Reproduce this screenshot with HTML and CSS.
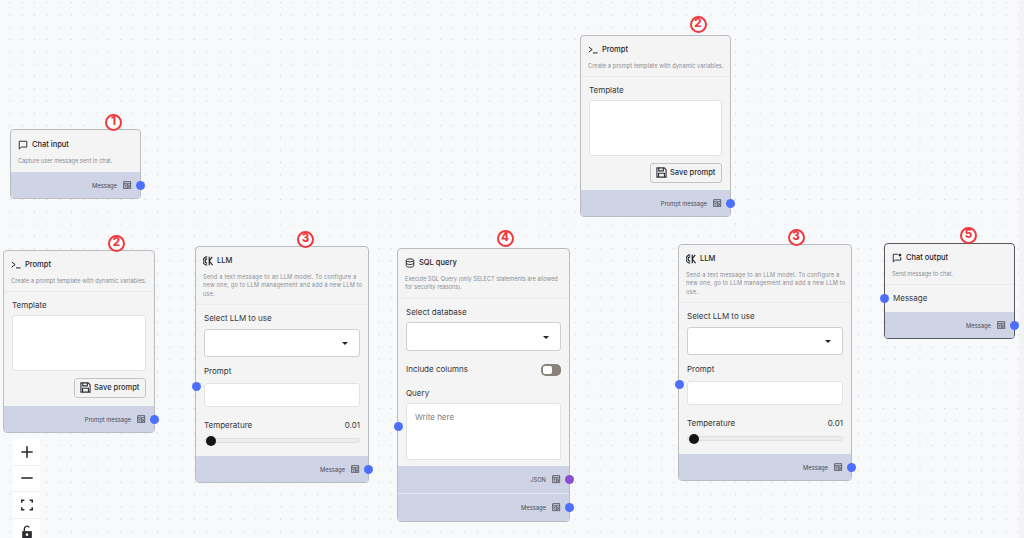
FILE: index.html
```html
<!DOCTYPE html>
<html lang="en">
<head>
<meta charset="utf-8">
<title>Flow canvas</title>
<link rel="stylesheet" href="styles.css">
</head>
<body>
<svg class="defs" width="0" height="0" aria-hidden="true">
  <symbol id="i-out" viewBox="0 0 12 12"><path d="M1 1h10v10H1zM1 4h10M6 4v7M7.500 6l2.500 3.500M10 6L7.500 9.500M2.500 6.500h2M2.500 8.500h2" fill="none" stroke="currentColor" stroke-width="1.200"/></symbol>
  <symbol id="i-chat" viewBox="0 0 12 12"><path d="M1.500 1.500h9v7H4L1.500 10.800z" fill="none" stroke="currentColor" stroke-width="1.100" stroke-linejoin="round"/></symbol>
  <symbol id="i-chatout" viewBox="0 0 12 12"><path d="M7 1.500H1.500v9.300L4 8.500h6.500V5" fill="none" stroke="currentColor" stroke-width="1.100" stroke-linejoin="round"/><circle cx="9.500" cy="2.500" r="1.700" fill="currentColor"/></symbol>
  <symbol id="i-prompt" viewBox="0 0 12 12"><path d="M1 2.500L5 5.500 1 8.500M6 9.500h5.500" fill="none" stroke="currentColor" stroke-width="1.200"/></symbol>
  <symbol id="i-llm" viewBox="0 0 12 12"><path d="M5 1a5 5 0 0 0 0 10M5 3.500a2.500 2.500 0 0 0 0 5M7.500 .8v10.400M7.500 6l3.500-5M7.500 6l4 5" fill="none" stroke="currentColor" stroke-width="1.400"/></symbol>
  <symbol id="i-db" viewBox="0 0 12 12"><ellipse cx="6" cy="2.800" rx="4.500" ry="1.800" fill="none" stroke="currentColor" stroke-width="1.100"/><path d="M1.500 2.800v6.400c0 1 2 1.800 4.500 1.800s4.500-.8 4.500-1.800V2.800M1.500 6c0 1 2 1.800 4.500 1.800s4.500-.8 4.500-1.800" fill="none" stroke="currentColor" stroke-width="1.100"/></symbol>
  <symbol id="i-save" viewBox="0 0 12 12"><path d="M1 1h8l2 2v8H1zM3 1v3.200h5V1M2.800 11V6.800h6.400V11" fill="none" stroke="currentColor" stroke-width="1.200"/></symbol>
</svg>

<main class="canvas">

  <section class="node node-chat-input">
    <span class="badge">1</span>
    <header class="node-head">
      <h2 class="node-title"><svg class="head-icon"><use href="#i-chat"/></svg>Chat input</h2>
      <p class="node-desc">Capture user message sent in chat.</p>
    </header>
    <div class="outputs">
      <div class="output">Message<svg class="out-icon"><use href="#i-out"/></svg><span class="handle handle-out"></span></div>
    </div>
  </section>

  <section class="node node-prompt node-prompt-a">
    <span class="badge">2</span>
    <header class="node-head">
      <h2 class="node-title"><svg class="head-icon"><use href="#i-prompt"/></svg>Prompt</h2>
      <p class="node-desc">Create a prompt template with dynamic variables.</p>
    </header>
    <div class="node-body">
      <div class="field">
        <label class="field-label">Template</label>
        <div class="box box-template"></div>
      </div>
      <div class="button-row"><button class="save"><svg class="save-icon"><use href="#i-save"/></svg>Save prompt</button></div>
    </div>
    <div class="outputs">
      <div class="output">Prompt message<svg class="out-icon"><use href="#i-out"/></svg><span class="handle handle-out"></span></div>
    </div>
  </section>

  <section class="node node-llm node-llm-a">
    <span class="badge">3</span>
    <header class="node-head">
      <h2 class="node-title"><svg class="head-icon"><use href="#i-llm"/></svg>LLM</h2>
      <p class="node-desc">Send a text message to an LLM model. To configure a<br>new one, go to LLM management and add a new LLM to<br>use.</p>
    </header>
    <div class="node-body">
      <div class="field">
        <label class="field-label">Select LLM to use</label>
        <div class="box box-select"><span class="caret"></span></div>
      </div>
      <div class="field">
        <label class="field-label">Prompt</label>
        <div class="box box-input"><span class="handle handle-in"></span></div>
      </div>
      <div class="field field-temperature">
        <div class="label-row"><label class="field-label">Temperature</label><span class="field-label">0.01</span></div>
        <div class="slider"><span class="thumb"></span></div>
      </div>
    </div>
    <div class="outputs">
      <div class="output">Message<svg class="out-icon"><use href="#i-out"/></svg><span class="handle handle-out"></span></div>
    </div>
  </section>

  <section class="node node-sql">
    <span class="badge">4</span>
    <header class="node-head">
      <h2 class="node-title"><svg class="head-icon"><use href="#i-db"/></svg>SQL query</h2>
      <p class="node-desc">Execute SQL Query (only SELECT statements are allowed for security reasons).</p>
    </header>
    <div class="node-body">
      <div class="field">
        <label class="field-label">Select database</label>
        <div class="box box-select"><span class="caret"></span></div>
      </div>
      <div class="field toggle-row">
        <label class="field-label">Include columns</label>
        <span class="toggle"><span class="knob"></span></span>
      </div>
      <div class="field">
        <label class="field-label">Query</label>
        <div class="box box-query">Write here<span class="handle handle-in handle-query"></span></div>
      </div>
    </div>
    <div class="outputs">
      <div class="output">JSON<svg class="out-icon"><use href="#i-out"/></svg><span class="handle handle-out handle-json"></span></div>
      <div class="output">Message<svg class="out-icon"><use href="#i-out"/></svg><span class="handle handle-out"></span></div>
    </div>
  </section>

  <section class="node node-prompt node-prompt-b">
    <span class="badge">2</span>
    <header class="node-head">
      <h2 class="node-title"><svg class="head-icon"><use href="#i-prompt"/></svg>Prompt</h2>
      <p class="node-desc">Create a prompt template with dynamic variables.</p>
    </header>
    <div class="node-body">
      <div class="field">
        <label class="field-label">Template</label>
        <div class="box box-template"></div>
      </div>
      <div class="button-row"><button class="save"><svg class="save-icon"><use href="#i-save"/></svg>Save prompt</button></div>
    </div>
    <div class="outputs">
      <div class="output">Prompt message<svg class="out-icon"><use href="#i-out"/></svg><span class="handle handle-out"></span></div>
    </div>
  </section>

  <section class="node node-llm node-llm-b">
    <span class="badge">3</span>
    <header class="node-head">
      <h2 class="node-title"><svg class="head-icon"><use href="#i-llm"/></svg>LLM</h2>
      <p class="node-desc">Send a text message to an LLM model. To configure a<br>new one, go to LLM management and add a new LLM to<br>use.</p>
    </header>
    <div class="node-body">
      <div class="field">
        <label class="field-label">Select LLM to use</label>
        <div class="box box-select"><span class="caret"></span></div>
      </div>
      <div class="field">
        <label class="field-label">Prompt</label>
        <div class="box box-input"><span class="handle handle-in"></span></div>
      </div>
      <div class="field field-temperature">
        <div class="label-row"><label class="field-label">Temperature</label><span class="field-label">0.01</span></div>
        <div class="slider"><span class="thumb"></span></div>
      </div>
    </div>
    <div class="outputs">
      <div class="output">Message<svg class="out-icon"><use href="#i-out"/></svg><span class="handle handle-out"></span></div>
    </div>
  </section>

  <section class="node node-chat-output">
    <span class="badge">5</span>
    <header class="node-head">
      <h2 class="node-title"><svg class="head-icon"><use href="#i-chatout"/></svg>Chat output</h2>
      <p class="node-desc">Send message to chat.</p>
    </header>
    <div class="node-body">
      <div class="field">
        <label class="field-label">Message</label>
        <span class="handle handle-in handle-message"></span>
      </div>
    </div>
    <div class="outputs">
      <div class="output">Message<svg class="out-icon"><use href="#i-out"/></svg><span class="handle handle-out"></span></div>
    </div>
  </section>

  <nav class="controls">
    <button class="control"><svg class="control-icon" viewBox="0 0 16 16"><path d="M8 1.500v13M1.500 8h13" fill="none" stroke="currentColor" stroke-width="1.800"/></svg></button>
    <button class="control"><svg class="control-icon" viewBox="0 0 16 16"><path d="M1.500 8h13" fill="none" stroke="currentColor" stroke-width="1.800"/></svg></button>
    <button class="control"><svg class="control-icon" viewBox="0 0 16 16"><path d="M2 5.500V2.500h3M11 2.500h3v3M14 10.500v3h-3M5 13.500H2v-3" fill="none" stroke="currentColor" stroke-width="1.800"/></svg></button>
    <button class="control"><svg class="control-icon" viewBox="0 0 16 16"><path d="M2.500 7h11v8h-11z" fill="currentColor"/><path d="M5 7V4.500a3 3 0 0 1 5.500-1.800" fill="none" stroke="currentColor" stroke-width="1.600"/><circle cx="8" cy="11" r="1.500" fill="#fff"/></svg></button>
  </nav>

  <div class="scroll-track"></div>

</main>
</body>
</html>
```

FILE: styles.css
```css
* { box-sizing: border-box; }

html, body {
  margin: 0;
  height: 100%;
  overflow: hidden;
}

body {
  font-family: Inter, "Noto Sans", sans-serif;
  color: #1f2329;
}

.defs { position: absolute; }

.canvas {
  position: relative;
  width: 1024px;
  height: 538px;
  overflow: hidden;
  background-color: #f8f9fb;
  background-image: radial-gradient(circle, #d2d5da 0.6px, transparent 1px);
  background-size: 12.3px 12.3px;
  background-position: 3.85px -3.45px;
}

.scroll-track {
  position: absolute;
  top: 0;
  right: 0;
  bottom: 0;
  width: 5px;
  background: #f3f3f5;
}

/* free canvas placement of diagram nodes */
.node {
  position: absolute;
  z-index: 1;
  display: flex;
  flex-direction: column;
  background: #f4f4f4;
  border: 1.5px solid #b9bcc1;
  border-radius: 4px;
}
.node-chat-input  { left: 10px;  top: 129px; width: 131px; height: 70px; }
.node-prompt-a    { left: 3px;   top: 250px; width: 152px; height: 183px; }
.node-llm-a       { left: 195px; top: 246px; width: 174px; height: 237px; }
.node-sql         { left: 397px; top: 248px; width: 173px; height: 274px; }
.node-prompt-b    { left: 580px; top: 35px;  width: 151px; height: 182px; }
.node-llm-b       { left: 678px; top: 244px; width: 174px; height: 237px; }
.node-chat-output { left: 884px; top: 243px; width: 131px; height: 96px; border-color: #55585d; }

.badge {
  position: absolute;
  left: 50%;
  width: 17px;
  height: 17px;
  display: flex;
  align-items: center;
  justify-content: center;
  border: 2px solid #f0393d;
  border-radius: 50%;
  color: #f0393d;
  background: #fff;
  font-size: 11.500px;
  font-weight: 800;
  line-height: 1;
}
.node-chat-input .badge  { margin-left: 29.500px; top: -16.500px; }
.node-prompt-a .badge    { margin-left: 29px; top: -16.500px; }
.node-llm-a .badge       { margin-left: 15px; top: -16.500px; }
.node-sql .badge         { margin-left: 13px; top: -19.500px; }
.node-prompt-b .badge    { margin-left: 34px; top: -20.500px; }
.node-llm-b .badge       { margin-left: 22.500px; top: -16.500px; }
.node-chat-output .badge { margin-left: 10.500px; top: -17.500px; }

.node-head {
  padding: 8px 7px 6px;
  border-bottom: 1px solid #ebebeb;
}
.node-chat-input .node-head { flex: 1; padding-top: 9px; border-bottom: 0; }

.node-title {
  display: flex;
  align-items: center;
  gap: 4px;
  margin: 0 0 7px;
  height: 11px;
  font-size: 7.500px;
  font-weight: 500;
  line-height: 11px;
}

.head-icon {
  width: 10px;
  height: 10px;
  flex: none;
}

.node-desc {
  margin: 0;
  font-size: 5.650px;
  line-height: 8.300px;
  color: #8b8e94;
}
.node-llm .node-desc { letter-spacing: 0.2px; white-space: nowrap; }
.node-prompt .node-desc { letter-spacing: 0.07px; white-space: nowrap; }

.node-body {
  flex: 1;
  display: flex;
  flex-direction: column;
  padding: 8px 8px 0;
}

.field { position: relative; }
.node-llm .field + .field { margin-top: 9px; }
.node-llm .field-temperature.field { margin-top: 13.500px; }
.node-sql .field + .field { margin-top: 12.500px; }

.field-label {
  display: block;
  font-size: 8px;
  line-height: 11px;
  color: #33363b;
}

.label-row {
  display: flex;
  justify-content: space-between;
}

.box {
  position: relative;
  margin-top: 5px;
  background: #fff;
  border: 1px solid #e1e2e4;
  border-radius: 3px;
}
.box-template { height: 56px; margin-top: 4px; }
.box-select {
  height: 28px;
  border: 1.500px solid #cfd0d3;
}
.node-sql .box-select { height: 29px; margin-top: 4.500px; }
.box-input { height: 24px; margin-top: 6px; }
.box-query {
  height: 57px;
  margin-top: 3.500px;
  padding: 8px 8px;
  font-size: 8px;
  line-height: 10px;
  color: #7e8085;
}

.caret {
  position: absolute;
  right: 11px;
  top: 50%;
  margin-top: -1px;
  border: 3px solid transparent;
  border-top: 3.500px solid #1f2329;
  border-bottom: 0;
}

.slider {
  position: relative;
  height: 5px;
  margin-top: 7px;
  background: #ececec;
  border: 1px solid #dfdfdf;
  border-radius: 3px;
}
.thumb {
  position: absolute;
  left: 1px;
  top: -3.500px;
  width: 10px;
  height: 10px;
  border-radius: 50%;
  background: #161616;
}

.toggle-row {
  display: flex;
  align-items: center;
  justify-content: space-between;
  height: 12px;
}
.toggle {
  display: flex;
  justify-content: flex-start;
  width: 20px;
  height: 12px;
  padding: 2px;
  background: #8a8178;
  border-radius: 5px;
}
.knob {
  width: 9px;
  height: 8px;
  background: #fff;
  border-radius: 2px;
}

.button-row {
  display: flex;
  justify-content: flex-end;
  margin-top: 6.500px;
}
.save {
  display: flex;
  align-items: center;
  gap: 3px;
  height: 20px;
  width: 72px;
  padding: 0 5px;
  background: #f4f4f4;
  border: 1px solid #c4c5c8;
  border-radius: 3px;
  color: #2c2f34;
  font-family: inherit;
  font-size: 7.500px;
  font-weight: 500;
  white-space: nowrap;
}
.save-icon {
  width: 11px;
  height: 11px;
  flex: none;
}

.outputs { display: flex; flex-direction: column; gap: 1px; background: #e6e6ea; border-radius: 0 0 3px 3px; }
.output {
  position: relative;
  display: flex;
  align-items: center;
  justify-content: flex-end;
  gap: 6px;
  height: 26px;
  padding: 0 8.500px 0 0;
  background: #cfd3e6;
  font-size: 5.800px;
  color: #4a4c55;
}
.node-sql .output { height: 27px; }
.output:last-child { border-radius: 0 0 3px 3px; }

.out-icon {
  width: 8.500px;
  height: 8.500px;
  color: #45474f;
  flex: none;
}

.handle {
  position: absolute;
  width: 9px;
  height: 9px;
  border-radius: 50%;
  background: #4d6fff;
}
.handle-out { right: -5px; top: 50%; margin-top: -4.500px; }
.handle-json { background: #8b4fd0; }
.handle-in { left: -13.500px; top: -1.500px; }
.handle-query { top: 18.500px; }
.handle-message { top: 1px; }

.controls {
  position: absolute;
  z-index: 2;
  left: 13px;
  top: 439px;
  display: flex;
  flex-direction: column;
  width: 27px;
  background: #fff;
}
.control {
  display: flex;
  align-items: center;
  justify-content: center;
  flex: none;
  width: 27px;
  height: 26.600px;
  padding: 0;
  background: #fff;
  border: 0;
  border-bottom: 1px solid #eee;
  color: #2a2c30;
}
.control-icon { width: 14px; height: 14px; }
```
